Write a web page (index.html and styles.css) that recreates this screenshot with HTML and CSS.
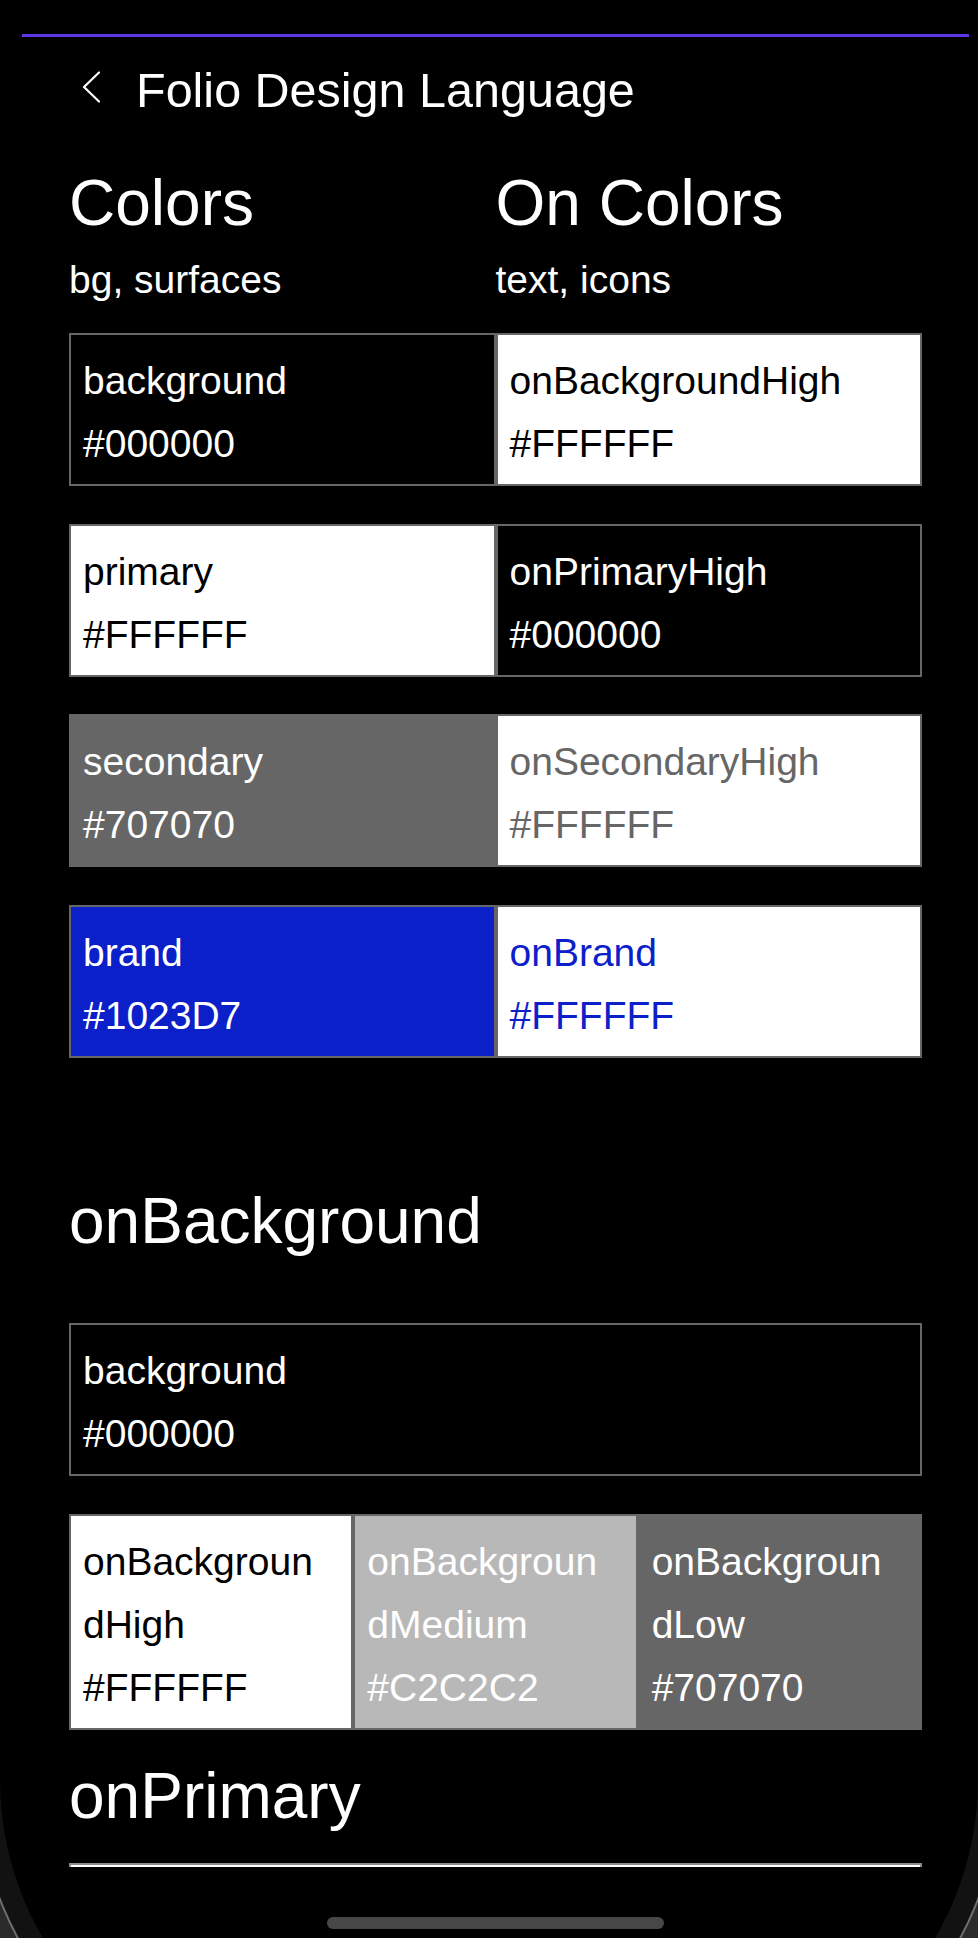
FILE: index.html
```html
<!DOCTYPE html>
<html lang="en">
<head>
<meta charset="utf-8">
<title>Folio Design Language</title>
<link rel="stylesheet" href="styles.css">
</head>
<body>
<div class="screen">
  <div class="topline"></div>
  <div class="scroll">
    <header class="nav">
      <svg class="back" width="18" height="32" viewBox="0 0 18 32" aria-hidden="true">
        <polyline points="17,1.5 2,16 17,30.5" fill="none" stroke="#ffffff" stroke-width="2.2" stroke-linecap="round" stroke-linejoin="round"/>
      </svg>
      <h1 class="title">Folio Design Language</h1>
    </header>

    <div class="cols">
      <div class="col">
        <h2 class="heading">Colors</h2>
        <p class="sub">bg, surfaces</p>
      </div>
      <div class="col">
        <h2 class="heading">On Colors</h2>
        <p class="sub">text, icons</p>
      </div>
    </div>

    <div class="swatches">
      <div class="row two">
        <div class="cell bg-black t-white"><div>background</div><div>#000000</div></div>
        <div class="cell bg-white t-black"><div>onBackgroundHigh</div><div>#FFFFFF</div></div>
      </div>
      <div class="row two">
        <div class="cell bg-white t-black"><div>primary</div><div>#FFFFFF</div></div>
        <div class="cell bg-black t-white"><div>onPrimaryHigh</div><div>#000000</div></div>
      </div>
      <div class="row two">
        <div class="cell bg-grey t-white"><div>secondary</div><div>#707070</div></div>
        <div class="cell bg-white t-grey"><div>onSecondaryHigh</div><div>#FFFFFF</div></div>
      </div>
      <div class="row two">
        <div class="cell bg-blue t-white"><div>brand</div><div>#1023D7</div></div>
        <div class="cell bg-white t-blue"><div>onBrand</div><div>#FFFFFF</div></div>
      </div>
    </div>

    <h2 class="heading section-a">onBackground</h2>

    <div class="row one single">
      <div class="cell bg-black t-white"><div>background</div><div>#000000</div></div>
    </div>

    <div class="row three triple">
      <div class="cell bg-white t-black"><div>onBackgroun</div><div>dHigh</div><div>#FFFFFF</div></div>
      <div class="cell bg-light t-white"><div>onBackgroun</div><div>dMedium</div><div>#C2C2C2</div></div>
      <div class="cell bg-grey t-white"><div>onBackgroun</div><div>dLow</div><div>#707070</div></div>
    </div>

    <h2 class="heading section-b">onPrimary</h2>

    <div class="next-box"></div>
  </div>
  <div class="home"></div>
</div>
</body>
</html>
```

FILE: styles.css
```css
html, body {
  margin: 0;
  padding: 0;
  height: 1938px;
  overflow: hidden;
  background: #2a2a2a;
}

body {
  font-family: "Liberation Sans", Arial, sans-serif;
  color: #ffffff;
}

.screen {
  position: relative;
  height: 2092px;
  background: #000000;
  border-radius: 0 0 312px 312px;
  box-shadow: 0 0 0 21px #121212, 0 0 0 23px #6e6e6e;
}

.topline {
  margin: 0 9px 0 22px;
  padding-top: 34px;
  height: 3px;
  background: #5b35e6;
  background-clip: content-box;
}

.scroll {
  height: 1830px;
  overflow: hidden;
  box-sizing: border-box;
  padding: 0 56px 0 69px;
}

/* header */
.nav {
  display: flex;
  align-items: flex-start;
  gap: 36px;
  margin-top: 25px;
  height: 56px;
  padding-left: 13px;
}

.back {
  display: block;
  margin-top: 9px;
  flex: none;
}

.title {
  margin: 0;
  font-size: 48.5px;
  font-weight: 400;
  line-height: 56px;
  white-space: nowrap;
}

/* column headings */
.cols {
  display: grid;
  grid-template-columns: 1fr 1fr;
  margin-top: 48px;
}

.heading {
  margin: 0;
  font-size: 64px;
  font-weight: 400;
  line-height: 74px;
  white-space: nowrap;
}

.sub {
  margin: 16px 0 0;
  font-size: 39px;
  line-height: 48px;
}

/* swatches */
.swatches {
  display: flex;
  flex-direction: column;
  gap: 37.5px;
  margin-top: 29px;
}

.row {
  display: grid;
}

.row.two {
  grid-template-columns: 1fr 1fr;
}

.row.one {
  grid-template-columns: 1fr;
}

.row.three {
  grid-template-columns: 1fr 1fr 1fr;
}

.cell {
  border: 2px solid #666666;
  padding: 14px 12px 9px 12px;
  font-size: 39px;
  line-height: 63px;
  min-width: 0;
  white-space: nowrap;
}

.bg-black { background: #000000; }
.bg-white { background: #ffffff; }
.bg-grey { background: #666666; }
.bg-light { background: #b8b8b8; }
.bg-blue { background: #0c20c9; }

.t-white { color: #ffffff; }
.t-black { color: #000000; }
.t-grey { color: #666666; }
.t-blue { color: #0c20c9; }

.section-a {
  margin-top: 126.5px;
}

.single {
  margin-top: 65px;
}

.triple {
  margin-top: 37.5px;
}

.section-b {
  margin-top: 29.5px;
}

/* top edge of the next (scrolled-off) swatch row */
.next-box {
  margin-top: 30px;
  height: 153px;
  box-sizing: border-box;
  border: 2px solid #8a8a8a;
  background: #ffffff;
}

/* home indicator */
.home {
  position: absolute;
  left: 327px;
  top: 1917px;
  width: 337px;
  height: 12px;
  border-radius: 6px;
  background: #474747;
}
```
